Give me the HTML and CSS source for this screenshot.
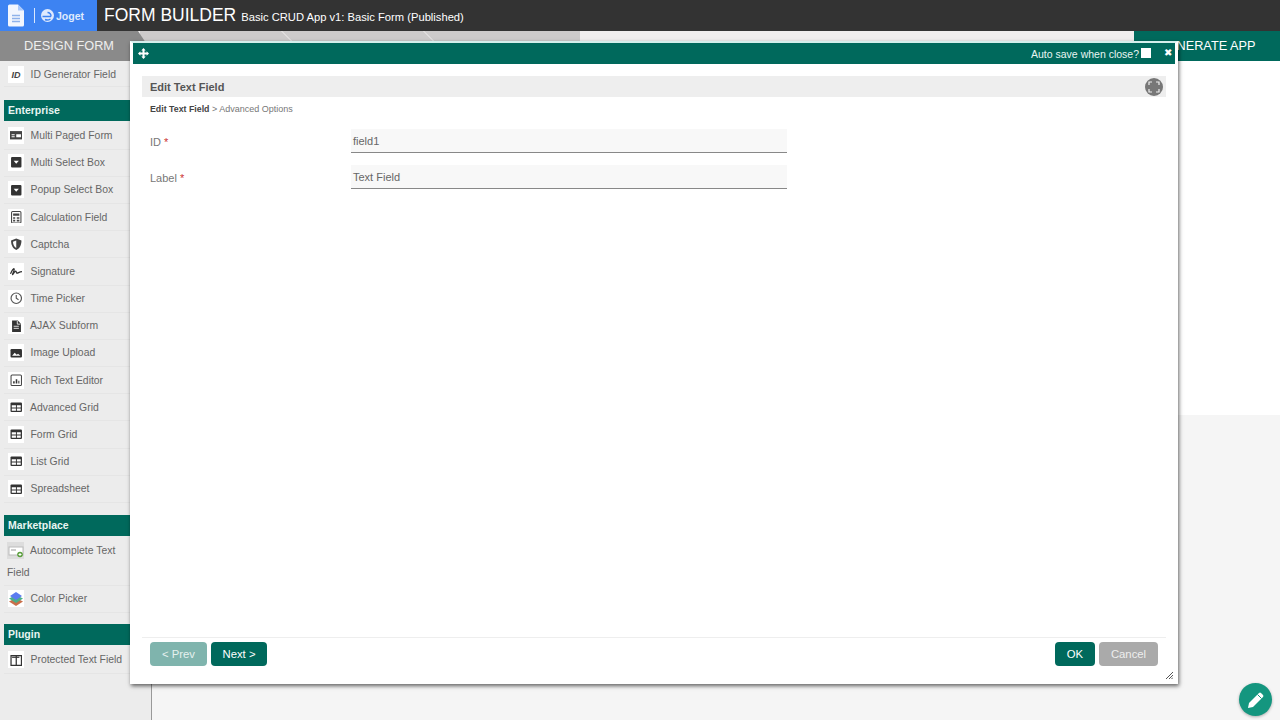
FILE: index.html
```html
<!DOCTYPE html>
<html lang="en">
<head>
<meta charset="utf-8">
<title>Form Builder</title>
<link rel="stylesheet" href="styles.css">
</head>
<body>
<header class="top">
  <div class="brand">
    <svg class="doc" width="16" height="23" viewBox="0 0 16 22"><path d="M1.500 0H10l6 6v14.500a1.500 1.500 0 0 1-1.500 1.500h-13A1.500 1.500 0 0 1 0 20.500V1.500A1.500 1.500 0 0 1 1.500 0z" fill="#f2f6fe"/><path d="M10 0v6h6z" fill="#a9c8fb"/><path d="M4 11h8M4 14h8M4 17h8" stroke="#8fb2ea" stroke-width="1.300"/></svg>
    <span class="sep"></span>
    <svg width="13" height="13" viewBox="0 0 13 13"><circle cx="6.500" cy="6.500" r="6.500" fill="#dfeafd"/><path d="M1.500 7.500h8.500M10 7.500a3.500 3.500 0 0 0-3.500-4M4 10.500c2 1 4 .5 5.500-.5" stroke="#3d83f2" stroke-width="1.400" fill="none"/></svg>
    <span class="joget">Joget</span>
  </div>
  <h1 class="title">FORM BUILDER</h1>
  <span class="subtitle">Basic CRUD App v1: Basic Form (Published)</span>
</header>
<nav class="tabs">
  <div class="tab tab-active">DESIGN FORM</div>
  <div class="tab-steps"><span class="step step-a"></span><span class="step step-b"></span><span class="step step-c"></span></div>
  <div class="tab-rest"></div>
  <div class="tab-generate">GENERATE APP</div>
</nav>
<div class="main">
  <aside class="side">
    <div class="item first"><span class="ico ico-id">ID</span>ID Generator Field</div>
    <div class="group group-first">Enterprise</div>
    <div class="item"><span class="ico"><svg viewBox="0 0 12 12"><path d="M0 2h12v8H0z" fill="#444"/><path d="M1.500 5h3v1h-3zM1.500 7h3v1h-3zM6 5h4.500v3H6z" fill="#fff"/></svg></span>Multi Paged Form</div>
    <div class="item"><span class="ico"><svg viewBox="0 0 12 12"><rect x="1" y="1" width="10" height="10" rx="1" fill="#333"/><path d="M3.500 4.500h5L6 7.500z" fill="#fff"/></svg></span>Multi Select Box</div>
    <div class="item"><span class="ico"><svg viewBox="0 0 12 12"><rect x="1" y="1" width="10" height="10" rx="1" fill="#333"/><path d="M3.500 4.500h5L6 7.500z" fill="#fff"/></svg></span>Popup Select Box</div>
    <div class="item"><span class="ico"><svg viewBox="0 0 12 12"><rect x="1.500" y="0.500" width="9" height="11" rx="1" fill="none" stroke="#444"/><path d="M3 2.500h6v2H3zM3 6h2v1.500H3zM6.500 6H9v1.500H6.500zM3 8.500h2V10H3zM6.500 8.500H9V10H6.500z" fill="#444"/></svg></span>Calculation Field</div>
    <div class="item"><span class="ico"><svg viewBox="0 0 12 12"><path d="M6 0.500l5 1.800c0 4.200-1.500 7.500-5 9.200-3.500-1.700-5-5-5-9.200z" fill="#444"/><path d="M6 2.300v7.300c-2-1.200-3-3.400-3.200-6z" fill="#fff"/></svg></span>Captcha</div>
    <div class="item"><span class="ico"><svg viewBox="0 0 12 12"><path d="M0.500 8.500C2 5 3.500 3 4 3.800 4.500 5 2 9 2.500 9.200 3.500 9 4.500 5.500 5.500 5.800c.8.400.2 2 1.200 2 1.300 0 2-1.200 4.800-1.500" fill="none" stroke="#333" stroke-width="1.200"/></svg></span>Signature</div>
    <div class="item"><span class="ico"><svg viewBox="0 0 12 12"><circle cx="6" cy="6" r="5" fill="none" stroke="#555" stroke-width="1.100"/><path d="M6 2.800V6l2.200 1.500" fill="none" stroke="#555" stroke-width="1.100"/></svg></span>Time Picker</div>
    <div class="item tight"><span class="ico"><svg viewBox="0 0 12 12"><path d="M2 0.500h5.500L10.500 3.500v8H2z" fill="#333"/><path d="M7 1v3h3M3.500 6h5M3.500 8h5" fill="none" stroke="#fff" stroke-width=".8"/></svg></span>AJAX Subform</div>
    <div class="item"><span class="ico"><svg viewBox="0 0 12 12"><rect x="0.500" y="2" width="11" height="8" rx="1" fill="#333"/><path d="M2 8.500l2.500-3 2 2 1.200-1 2.300 2z" fill="#fff"/></svg></span>Image Upload</div>
    <div class="item"><span class="ico"><svg viewBox="0 0 12 12"><rect x="1" y="1" width="10" height="10" rx="1" fill="none" stroke="#444"/><path d="M3 7h1.500v2H3zM5.500 5H7v4H5.500zM8 6.500h1V9H8z" fill="#333"/></svg></span>Rich Text Editor</div>
    <div class="item tight"><span class="ico"><svg viewBox="0 0 12 12"><use href="#grid"/></svg></span>Advanced Grid</div>
    <div class="item"><span class="ico"><svg viewBox="0 0 12 12"><use href="#grid"/></svg></span>Form Grid</div>
    <div class="item"><span class="ico"><svg viewBox="0 0 12 12"><use href="#grid"/></svg></span>List Grid</div>
    <div class="item"><span class="ico"><svg viewBox="0 0 12 12"><use href="#grid"/></svg></span>Spreadsheet</div>
    <div class="group group-market">Marketplace</div>
    <div class="item wrap"><span class="ico ico-auto"><svg viewBox="0 0 16 16"><rect x="1" y="4" width="14" height="8" fill="#fff" stroke="#bbb"/><path d="M3 7h5" stroke="#999"/><circle cx="12" cy="11.500" r="2.800" fill="#5a9e3c"/><path d="M10.500 11.500h3M12 10v3" stroke="#fff"/></svg></span>Autocomplete Text Field</div>
    <div class="item"><span class="ico ico-color"><svg viewBox="0 0 16 16"><path d="M1 10.500l7-3.500 7 3.500-7 4.500z" fill="#c96f4a"/><path d="M1 7.500L8 4l7 3.500L8 12z" fill="#4caf8a"/><path d="M2 5L8 1l6 4-6 4z" fill="#5b7cf0"/></svg></span>Color Picker</div>
    <div class="group group-plugin">Plugin</div>
    <div class="item"><span class="ico"><svg viewBox="0 0 12 12"><path d="M1 1.500h10v9.500H1zM6 1.500v9.500" fill="none" stroke="#333" stroke-width="1.200"/><path d="M2 2.500h7v1.200H2z" fill="#333"/></svg></span>Protected Text Field</div>
  </aside>
  <section class="canvas"><div class="canvas-white"></div></section>
</div>
<svg class="defs" width="0" height="0"><defs><g id="grid"><rect x="0.500" y="1.500" width="11" height="9" rx="1" fill="#333"/><path d="M1.700 4h4v2.200h-4zM6.600 4h3.700v2.200H6.600zM1.700 7.100h4v2.200h-4zM6.600 7.100h3.700v2.200H6.600z" fill="#fff"/></g></defs></svg>

<div class="dialog">
  <div class="dialog-bar">
    <svg class="move" width="11" height="11" viewBox="0 0 12 12"><path d="M6 0l2.400 2.600H7.100v2.300h2.300V3.600L12 6 9.400 8.400V7.100H7.100v2.300h1.300L6 12 3.600 9.400h1.300V7.100H2.600v1.300L0 6l2.600-2.400v1.300h2.300V2.600H3.600z" fill="#fff"/></svg>
    <span class="autosave">Auto save when close?</span>
    <span class="check"></span>
    <span class="close">✖</span>
  </div>
  <div class="dialog-body">
    <div class="head">
      <span>Edit Text Field</span>
      <span class="fullscreen"><svg width="12" height="12" viewBox="0 0 12 12"><path d="M1 4V1h3M8 1h3v3M11 8v3H8M4 11H1V8" fill="none" stroke="#eee" stroke-width="1.200"/></svg></span>
    </div>
    <div class="crumbs"><b>Edit Text Field</b> &gt; Advanced Options</div>
    <div class="field field-first"><label class="field-label">ID <em>*</em></label><div class="field-input">field1</div></div>
    <div class="field"><label class="field-label">Label <em>*</em></label><div class="field-input">Text Field</div></div>
    <div class="spacer"></div>
    <div class="foot">
      <button class="btn btn-prev">&lt; Prev</button>
      <button class="btn btn-next">Next &gt;</button>
      <span class="spacer-x"></span>
      <button class="btn btn-ok">OK</button>
      <button class="btn btn-cancel">Cancel</button>
    </div>
  </div>
  <svg class="grip" width="7" height="7" viewBox="0 0 7 7"><path d="M0 7l7-7M3 7l4-4M5.500 7L7 5.500" stroke="#555"/></svg>
</div>
<div class="fab"><svg width="18" height="18" viewBox="0 0 18 18"><path d="M1 17l1-5L12 2a1.500 1.500 0 0 1 2 0l2 2a1.500 1.500 0 0 1 0 2L6 16z" fill="#fff"/><path d="M10.500 3.500l4 4" stroke="#14967f" stroke-width="1"/></svg></div>
</body>
</html>
```
FILE: styles.css
```css
* { box-sizing: border-box; }
html, body { margin: 0; height: 100%; overflow: hidden; }
body { font-family: "Liberation Sans", Arial, sans-serif; color: #666; background: #f5f5f5; display: flex; flex-direction: column; height: 720px; }
.top { height: 31px; background: #333; display: flex; align-items: center; color: #fff; flex: none; }
.brand { width: 97px; height: 31px; background: #3d83f2; display: flex; align-items: center; padding-left: 8px; flex: none; }
.sep { width: 1px; height: 15px; background: #dbe8fd; margin: 0 6px 0 10px; }
.joget { color: #dfeafd; font-size: 10.500px; font-weight: 700; margin-left: 2px; }
.title { font-size: 17.500px; font-weight: 400; margin: 0 0 0 7px; line-height: 31px; }
.subtitle { font-size: 11.200px; margin-left: 5px; padding-top: 3px; }
.tabs { height: 30px; display: flex; flex: none; background: #f0eeee; }
.tab { height: 30px; color: #eee; font-size: 12.750px; }
.tab-active { width: 146px; margin-right: -6px; z-index: 1; background: #8a8a8a; padding-left: 24px; line-height: 29px; clip-path: polygon(0 0, 138px 0, 146px 12px, 146px 100%, 0 100%); }
.tab-steps { width: 440px; height: 10px; display: flex; background: #cdcbcb; }
.step { border-right: 1px solid #f0eeee; transform: skewX(45deg); }
.step-a { width: 147px; }
.step-b { width: 142px; }
.step-c { flex: 1; border-right: 0; }
.tab-rest { flex: 1; }
.tab-generate { width: 146px; background: #00695c; color: #fff; font-size: 12.750px; line-height: 29px; padding-left: 24px; }
.main { flex: 1; display: flex; min-height: 0; }
.side { width: 152px; background: #ececec; border-right: 1px solid #999; font-size: 10.400px; flex: none; }
.item { height: 27.200px; margin-left: 4px; padding-left: 4px; display: flex; align-items: center; border-bottom: 1px solid #e5e5e5; width: 126px; white-space: nowrap; }
.item.first { height: 26px; padding-top: 2px; }
.ico { width: 16px; height: 17px; background: #fff; margin-right: 6.500px; display: flex; align-items: center; justify-content: center; flex: none; }
.ico svg { width: 12.500px; height: 12.500px; }
.tight .ico { margin-right: 6px; }
.ico-id { font-size: 9px; font-style: italic; font-weight: 700; color: #444; }
.ico-auto { background: #ddd; width: 17px; }
.ico-auto svg, .ico-color svg { width: 16px; height: 16px; }
.item.wrap { display: block; height: 49px; padding: 3px 0 0 3px; line-height: 22px; white-space: normal; }
.item.wrap .ico { display: inline-flex; vertical-align: middle; margin-right: 6px; }
.group { width: 126px; height: 21px; margin: 12px 0 0 4px; padding-left: 4px; background: #00695c; color: #e8f5f2; font-weight: 700; font-size: 10.500px; line-height: 20px; }
.group-first { margin-top: 13.400px; }
.group-market { margin-top: 11.600px; }
.group-plugin { margin-top: 11px; }
.group + .item { margin-top: 1px; }
.group-plugin + .item { margin-top: 2px; }
.canvas { flex: 1; background: #f5f5f5; }
.canvas-white { height: 354px; background: #fff; }
.defs { position: absolute; }
.dialog { position: absolute; z-index: 2; left: 130px; top: 41px; width: 1048px; height: 643px; background: #fff; border: 3px solid #fff; border-top: 2px solid #d4efec; box-shadow: 1px 2px 4px rgba(0,0,0,.6); display: flex; flex-direction: column; }
.dialog-bar { height: 21px; background: #00695c; display: flex; align-items: center; padding: 0 3px 0 5px; color: #e8f5f2; flex: none; }
.move { flex: none; }
.autosave { margin-left: auto; font-size: 10.500px; padding-top: 1px; }
.check { width: 10px; height: 10px; background: #fff; margin: 0 13px 2px 2px; }
.close { font-size: 10px; color: #fff; margin-bottom: 2px; }
.dialog-body { flex: 1; display: flex; flex-direction: column; padding: 12px 9px 0; min-height: 0; }
.head { height: 21px; background: #eee; display: flex; align-items: center; justify-content: space-between; padding: 0 3px 0 8px; font-size: 11px; font-weight: 700; color: #555; }
.fullscreen { width: 18px; height: 18px; border-radius: 50%; background: #777; display: flex; align-items: center; justify-content: center; }
.crumbs { font-size: 9px; color: #777; padding: 7px 0 0 8px; height: 21px; }
.crumbs b { color: #444; font-size: 8.800px; }
.field { display: flex; height: 36px; align-items: center; padding-left: 8px; }
.field-first { margin-top: 5px; }
.field-label { width: 201px; font-size: 11px; color: #777; padding-top: 2px; }
.field-label em { color: #c33; font-style: normal; }
.field-input { width: 436px; height: 24px; background: #f8f8f8; border-bottom: 1px solid #888; font-size: 11px; padding: 6px 2px 0; color: #666; }
.spacer { flex: 1; }
.foot { height: 44px; border-top: 1px solid #eee; display: flex; align-items: flex-start; padding: 4px 8px 0; gap: 4px; flex: none; }
.spacer-x { flex: 1; }
.btn { height: 24px; border: 0; border-radius: 4px; font: 11.300px "Liberation Sans", Arial, sans-serif; color: #fff; padding: 0; }
.btn-prev { width: 57px; background: #7fb4ad; color: #e6f1ef; }
.btn-next { width: 56px; background: #00695c; }
.btn-ok { width: 40px; background: #00695c; }
.btn-cancel { width: 59px; background: #aaa; color: #eee; }
.grip { position: absolute; right: 2px; bottom: 2px; }
.fab { position: absolute; right: 8px; bottom: 4px; width: 33px; height: 33px; border-radius: 50%; background: #14967f; display: flex; align-items: center; justify-content: center; box-shadow: 0 1px 3px rgba(0,0,0,.3); }
```
